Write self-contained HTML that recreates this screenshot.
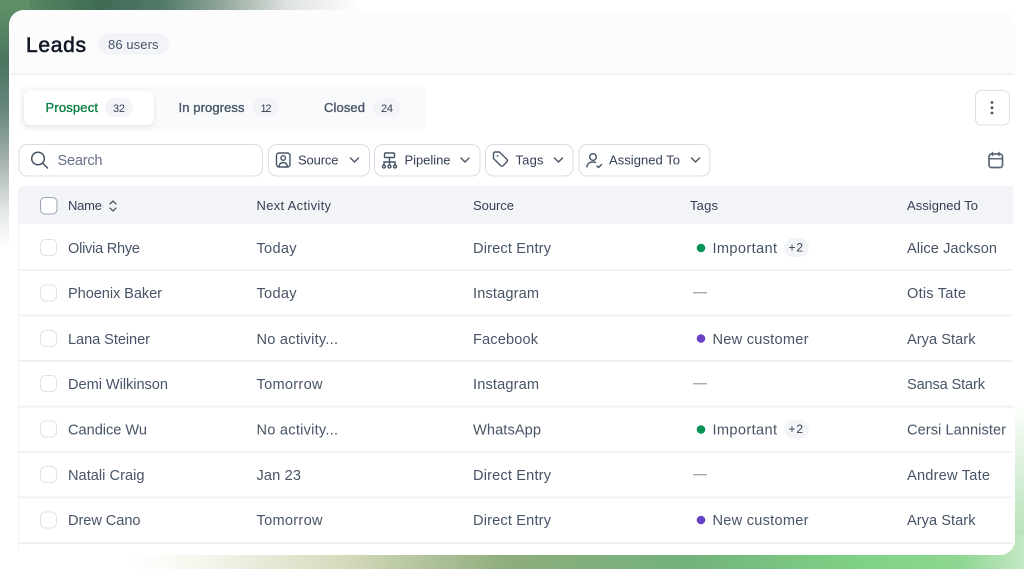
<!DOCTYPE html>
<html><head><meta charset="utf-8"><style>
html,body{margin:0;padding:0;background:#fff;width:1024px;height:569px;overflow:hidden}
svg{display:block}
text{font-family:"Liberation Sans",sans-serif;font-size:14.6px;fill:#475467}
.h{font-size:13px;fill:#344054}
.m{font-size:13px;fill:#475467;stroke:#475467;stroke-width:.35}
.b{font-size:11px;fill:#344054}
.ic{fill:none;stroke:#475467;stroke-width:1.4;stroke-linecap:round;stroke-linejoin:round}
</style></head><body>
<svg width="1024" height="569" viewBox="0 0 1024 569" xmlns="http://www.w3.org/2000/svg">
<defs>
<linearGradient id="t"><stop offset="0" stop-color="#5f9366"/><stop offset=".28" stop-color="#3f6b55"/><stop offset=".45" stop-color="#527a68"/><stop offset=".62" stop-color="#93a89c"/><stop offset=".8" stop-color="#dfe3e0"/><stop offset="1" stop-color="#fff"/></linearGradient>
<linearGradient id="l" x2="0" y2="1"><stop offset="0" stop-color="#5f9366"/><stop offset=".25" stop-color="#4a7560"/><stop offset=".45" stop-color="#6a887e"/><stop offset=".65" stop-color="#a8b4b1"/><stop offset=".85" stop-color="#e6e9e9"/><stop offset="1" stop-color="#fff"/></linearGradient>
<linearGradient id="bt"><stop offset="0" stop-color="#fff"/><stop offset=".08" stop-color="#f6f6ee"/><stop offset=".24" stop-color="#d5dabb"/><stop offset=".42" stop-color="#8fad7e"/><stop offset=".62" stop-color="#72b27c"/><stop offset=".82" stop-color="#7fd285"/><stop offset=".93" stop-color="#8ed792"/><stop offset="1" stop-color="#c5e8c5"/></linearGradient>
<linearGradient id="r" x2="0" y2="1"><stop offset="0" stop-color="#fff"/><stop offset="1" stop-color="#b8e2b9"/></linearGradient>
<filter id="s" x="-10%" y="-20%" width="120%" height="150%"><feDropShadow dx="0" dy="1.5" stdDeviation="2" flood-color="#101828" flood-opacity=".1"/></filter>
</defs>

<rect x="0" y="0" width="360" height="30" fill="url(#t)"/>
<rect x="0" y="0" width="30" height="250" fill="url(#l)"/>
<rect x="130" y="530" width="894" height="39" fill="url(#bt)"/>
<rect x="990" y="400" width="34" height="135" fill="url(#r)"/>

<rect x="9" y="10" width="1006" height="545" rx="15" fill="#fff"/>
<path d="M9 73V25a15 15 0 0 1 15-15h976a15 15 0 0 1 15 15v48z" fill="#fcfcfd"/>
<rect x="11" y="73" width="1002" height="2" fill="#f0f1f4"/>

<text x="26" y="52" textLength="60" style="font-size:21px;fill:#101828;stroke:#101828;stroke-width:.6">Leads</text>
<rect x="97.5" y="33.5" width="72" height="21" rx="10.5" fill="#f2f4f7"/>
<text x="108" y="49" textLength="50.5" style="font-size:13px;fill:#475467">86 users</text>

<rect x="19" y="85" width="408" height="46" rx="8" fill="#f9fafb"/>
<rect x="24" y="90.5" width="130" height="34.5" rx="7" fill="#fff" filter="url(#s)"/>
<text x="45.5" y="112" textLength="52.5" class="m" style="fill:#0a8043;stroke:#0a8043">Prospect</text>
<rect x="105" y="98" width="28" height="19" rx="9.5" fill="#f2f4f7"/>
<text x="113" y="112" class="b" textLength="12">32</text>
<text x="178.5" y="112" textLength="66" class="m">In progress</text>
<rect x="252.5" y="98" width="26" height="19" rx="9.5" fill="#f2f4f7"/>
<text x="260.5" y="112" class="b" textLength="11">12</text>
<text x="324" y="112" textLength="41" class="m">Closed</text>
<rect x="373" y="98" width="28" height="19" rx="9.5" fill="#f2f4f7"/>
<text x="381" y="112" class="b" textLength="12">24</text>

<rect x="975.5" y="90.5" width="34" height="34.5" rx="6" fill="#fff" stroke="#dcdfe6"/>
<circle cx="992" cy="102.5" r="1.4" fill="#475467"/><circle cx="992" cy="107.8" r="1.4" fill="#475467"/><circle cx="992" cy="113" r="1.4" fill="#475467"/>

<rect x="19" y="144.5" width="243.5" height="31.5" rx="8" fill="#fff" stroke="#d9dde5"/>
<circle cx="38" cy="158.5" r="6.3" class="ic" style="stroke-width:1.5"/>
<path d="M43 163.500l4.500 4.500" class="ic" style="stroke-width:1.5"/>
<text x="57.5" y="165" textLength="45" style="fill:#667085">Search</text>

<rect x="268.5" y="144.5" width="101" height="31.5" rx="8" fill="#fff" stroke="#d9dde5"/>
<rect x="276.5" y="153" width="13.5" height="14" rx="2.5" class="ic"/>
<circle cx="283.2" cy="158" r="2.3" class="ic"/>
<path d="M279 166.500c.5-3 2-4 4.200-4s3.700 1 4.200 4" class="ic"/>
<text x="298" y="164.5" class="h" textLength="40.5">Source</text>
<path d="M350.500 158l4 4 4-4" class="ic"/>

<rect x="374.5" y="144.5" width="105.5" height="31.5" rx="8" fill="#fff" stroke="#d9dde5"/>
<rect x="384.5" y="153" width="10" height="4.5" rx="1" class="ic"/>
<path d="M389.500 157.500v4.500M384 165v-3h11v3M389.500 162v3" class="ic"/>
<circle cx="384" cy="166.5" r="1.5" class="ic"/><circle cx="389.5" cy="166.5" r="1.5" class="ic"/><circle cx="395" cy="166.5" r="1.5" class="ic"/>
<text x="404.5" y="164.5" class="h" textLength="46">Pipeline</text>
<path d="M461 158l4 4 4-4" class="ic"/>

<rect x="485.5" y="144.5" width="87.5" height="31.5" rx="8" fill="#fff" stroke="#d9dde5"/>
<path d="M493.500 155v-1.500a1.500 1.500 0 0 1 1.500-1.500h4.500l7.500 7.500a1.500 1.500 0 0 1 0 2.200l-4 4a1.500 1.500 0 0 1-2.200 0l-7.300-7.200z" class="ic"/>
<circle cx="497.5" cy="156" r=".9" fill="#475467"/>
<text x="515.5" y="164.5" class="h" textLength="28">Tags</text>
<path d="M554.500 158l4 4 4-4" class="ic"/>

<rect x="579" y="144.5" width="131" height="31.5" rx="8" fill="#fff" stroke="#d9dde5"/>
<circle cx="593" cy="157" r="3.3" class="ic"/>
<path d="M587 167c0-3.200 2.500-5 6-5 1 0 1.800.1 2.500.4" class="ic"/>
<path d="M597 166l1.500 1.500 3-3" class="ic"/>
<text x="609" y="164.5" class="h" textLength="71">Assigned To</text>
<path d="M691.500 158l4 4 4-4" class="ic"/>

<rect x="989" y="154" width="13.5" height="13.5" rx="2.5" class="ic" style="stroke:#5b6678;stroke-width:1.7"/>
<path d="M989 158.800h13.500M992.500 152.500v3M999 152.500v3" class="ic" style="stroke:#5b6678;stroke-width:1.5"/>

<path d="M18 192a6 6 0 0 1 6-6h989v38H18z" fill="#f2f4f7"/>
<rect x="40.5" y="197.5" width="16.5" height="16.5" rx="4.5" fill="#fff" stroke="#98a2b3"/>
<text x="68" y="210" class="h" textLength="34">Name</text>
<path d="M110 204l3-3 3 3M110 208l3 3 3-3" class="ic" style="stroke:#344054;stroke-width:1.2"/>
<text x="256.5" y="210" class="h" textLength="74.5">Next Activity</text>
<text x="473" y="210" class="h" textLength="41">Source</text>
<text x="690" y="210" class="h" textLength="28">Tags</text>
<text x="907" y="210" class="h" textLength="71">Assigned To</text>

<rect x="18" y="224" width="1" height="327" fill="#f4f5f7"/>
<g fill="#f0f1f4">
<rect x="18" y="269" width="995" height="2"/><rect x="18" y="314.5" width="995" height="2"/><rect x="18" y="360" width="995" height="2"/><rect x="18" y="405.5" width="995" height="2"/><rect x="18" y="451" width="995" height="2"/><rect x="18" y="496.5" width="995" height="2"/><rect x="18" y="542" width="995" height="2"/>
</g>
<g fill="#fff" stroke="#dfe2e8">
<rect x="40.5" y="239.5" width="16" height="16" rx="5"/><rect x="40.5" y="285" width="16" height="16" rx="5"/><rect x="40.5" y="330.5" width="16" height="16" rx="5"/><rect x="40.5" y="375.5" width="16" height="16" rx="5"/><rect x="40.5" y="421" width="16" height="16" rx="5"/><rect x="40.5" y="466.5" width="16" height="16" rx="5"/><rect x="40.5" y="512" width="16" height="16" rx="5"/>
</g>

<text x="68" y="253" textLength="72">Olivia Rhye</text><text x="256.5" y="253" textLength="40">Today</text><text x="473" y="253" textLength="78">Direct Entry</text><text x="712.5" y="253" textLength="64.5">Important</text><text x="907" y="253" textLength="90">Alice Jackson</text>
<text x="68" y="298" textLength="94">Phoenix Baker</text><text x="256.5" y="298" textLength="40">Today</text><text x="473" y="298" textLength="66">Instagram</text><text x="907" y="298" textLength="59">Otis Tate</text>
<text x="68" y="344" textLength="82">Lana Steiner</text><text x="256.5" y="344" textLength="81.5">No activity...</text><text x="473" y="344" textLength="65">Facebook</text><text x="712.5" y="344" textLength="96">New customer</text><text x="907" y="344" textLength="68.5">Arya Stark</text>
<text x="68" y="389" textLength="100">Demi Wilkinson</text><text x="256.5" y="389" textLength="66">Tomorrow</text><text x="473" y="389" textLength="66">Instagram</text><text x="907" y="389" textLength="78">Sansa Stark</text>
<text x="68" y="434.5" textLength="79">Candice Wu</text><text x="256.5" y="434.5" textLength="81.5">No activity...</text><text x="473" y="434.5" textLength="68">WhatsApp</text><text x="712.5" y="434.5" textLength="64.5">Important</text><text x="907" y="434.5" textLength="99">Cersi Lannister</text>
<text x="68" y="480" textLength="76.5">Natali Craig</text><text x="256.5" y="480" textLength="44.5">Jan 23</text><text x="473" y="480" textLength="78">Direct Entry</text><text x="907" y="480" textLength="83">Andrew Tate</text>
<text x="68" y="525" textLength="72.5">Drew Cano</text><text x="256.5" y="525" textLength="66">Tomorrow</text><text x="473" y="525" textLength="78">Direct Entry</text><text x="712.5" y="525" textLength="96">New customer</text><text x="907" y="525" textLength="68.5">Arya Stark</text>

<circle cx="701" cy="248" r="4.3" fill="#079455"/>
<circle cx="701" cy="338.5" r="4.3" fill="#6941c6"/>
<circle cx="701" cy="429.5" r="4.3" fill="#079455"/>
<circle cx="701" cy="520" r="4.3" fill="#6941c6"/>
<rect x="784" y="238" width="25" height="19" rx="9.5" fill="#f2f4f7"/>
<text x="788.5" y="251.5" textLength="14.5" style="font-size:12px;fill:#344054">+2</text>
<rect x="784" y="419.5" width="25" height="19" rx="9.5" fill="#f2f4f7"/>
<text x="788.5" y="433" textLength="14.5" style="font-size:12px;fill:#344054">+2</text>
<g fill="#a3adb0"><rect x="693" y="292" width="14" height="1.4"/><rect x="693" y="383" width="14" height="1.4"/><rect x="693" y="474" width="14" height="1.4"/></g>
</svg>
</body></html>
